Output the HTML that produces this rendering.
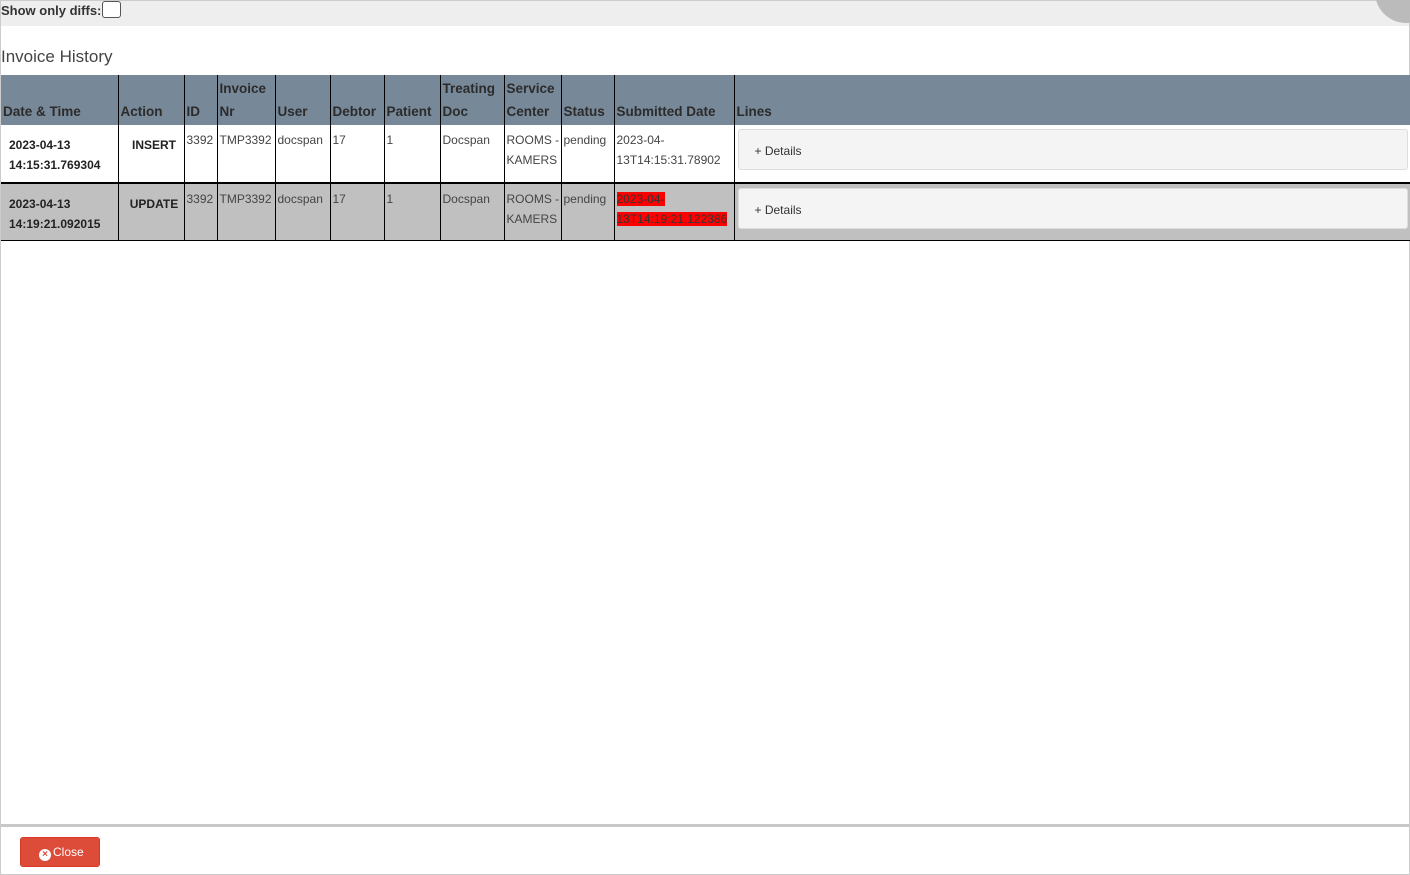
<!DOCTYPE html>
<html><head><meta charset="utf-8"><style>
*{box-sizing:border-box;margin:0;padding:0}
body{width:1410px;height:875px;background:#fff;font-family:"Liberation Sans",sans-serif;color:#333;position:relative;overflow:hidden}
.frame{position:absolute;left:0;top:0;width:1410px;height:875px;border:1px solid #ccc;border-top:1px solid #ccc}
.bar{position:absolute;left:1px;top:1px;width:1408px;height:25px;background:#eee;font-size:13px;font-weight:bold;color:#333;padding:0}
.cb{display:inline-block;width:19px;height:17px;border:1px solid #555;border-radius:3px;background:#fff;vertical-align:-3px;margin-left:1px}
.circ{position:absolute;right:-28px;top:-40px;width:62px;height:62px;border-radius:50%;background:#bbb}
h3{position:absolute;left:1px;top:47px;font-size:17px;font-weight:normal;color:#444}
table{position:absolute;left:1px;top:75px;width:1409px;border-collapse:collapse;table-layout:fixed}
th{background:#778899;height:50px;font-size:13.5px;font-weight:bold;color:#2b2b2b;text-align:left;vertical-align:bottom;padding:0 2px 2px 2px;line-height:23px;border-left:1px solid #000;overflow:hidden;white-space:nowrap}
th:first-child{border-left:none}
td{font-size:12px;color:#444;vertical-align:top;padding:5px 2px 0 2px;line-height:20px;border-left:1px solid #000;overflow:hidden;white-space:nowrap}
td:first-child{border-left:none}
tr.r1 td{height:58px;background:#fff;border-bottom:2px solid #000}
tr.r2 td{height:57px;background:#c0c0c0;border-bottom:1px solid #000}
td.b{font-weight:bold;color:#222;font-size:12px;padding-top:10px;padding-left:8px}
td.a{text-align:center;padding-top:10px}
.red{background:#f00;color:#333}
.det{margin:-1px 0 0 1px;height:41px;background:#f4f4f4;border:1px solid #ddd;border-radius:3px;font-size:12px;color:#333;padding:11px 0 0 16px}
.foot{position:absolute;left:1px;top:824px;width:1408px;height:3px;background:#c8c8c8}
.btn{position:absolute;left:20px;top:837px;width:80px;height:30px;background:#dd4b39;border:1px solid #d73925;border-radius:3px;color:#fff;font-size:12px;padding:7px 0 0 18px}
.x{display:inline-block;width:12px;height:12px;border-radius:50%;background:#fff;color:#dd4b39;font-size:10px;line-height:12px;text-align:center;font-weight:bold;vertical-align:-1px;margin-right:2px}
</style></head><body>
<div class="frame"></div>
<div class="bar">Show only diffs:<span class="cb"></span><div class="circ"></div></div>
<h3>Invoice History</h3>
<table>
<colgroup><col style="width:117px"><col style="width:66px"><col style="width:33px"><col style="width:58px"><col style="width:55px"><col style="width:54px"><col style="width:56px"><col style="width:64px"><col style="width:57px"><col style="width:53px"><col style="width:120px"><col></colgroup>
<tr><th>Date &amp; Time</th><th>Action</th><th>ID</th><th>Invoice<br>Nr</th><th>User</th><th>Debtor</th><th>Patient</th><th>Treating<br>Doc</th><th>Service<br>Center</th><th>Status</th><th>Submitted Date</th><th>Lines</th></tr>
<tr class="r1"><td class="b">2023-04-13<br>14:15:31.769304</td><td class="b a">INSERT</td><td>3392</td><td>TMP3392</td><td>docspan</td><td>17</td><td>1</td><td>Docspan</td><td>ROOMS -<br>KAMERS</td><td>pending</td><td>2023-04-<br>13T14:15:31.78902</td><td><div class="det">+ Details</div></td></tr>
<tr class="r2"><td class="b">2023-04-13<br>14:19:21.092015</td><td class="b a">UPDATE</td><td>3392</td><td>TMP3392</td><td>docspan</td><td>17</td><td>1</td><td>Docspan</td><td>ROOMS -<br>KAMERS</td><td>pending</td><td><span class="red">2023-04-</span><br><span class="red">13T14:19:21.122386</span></td><td><div class="det">+ Details</div></td></tr>
</table>
<div class="foot"></div>
<div class="btn"><span class="x">×</span>Close</div>
</body></html>
